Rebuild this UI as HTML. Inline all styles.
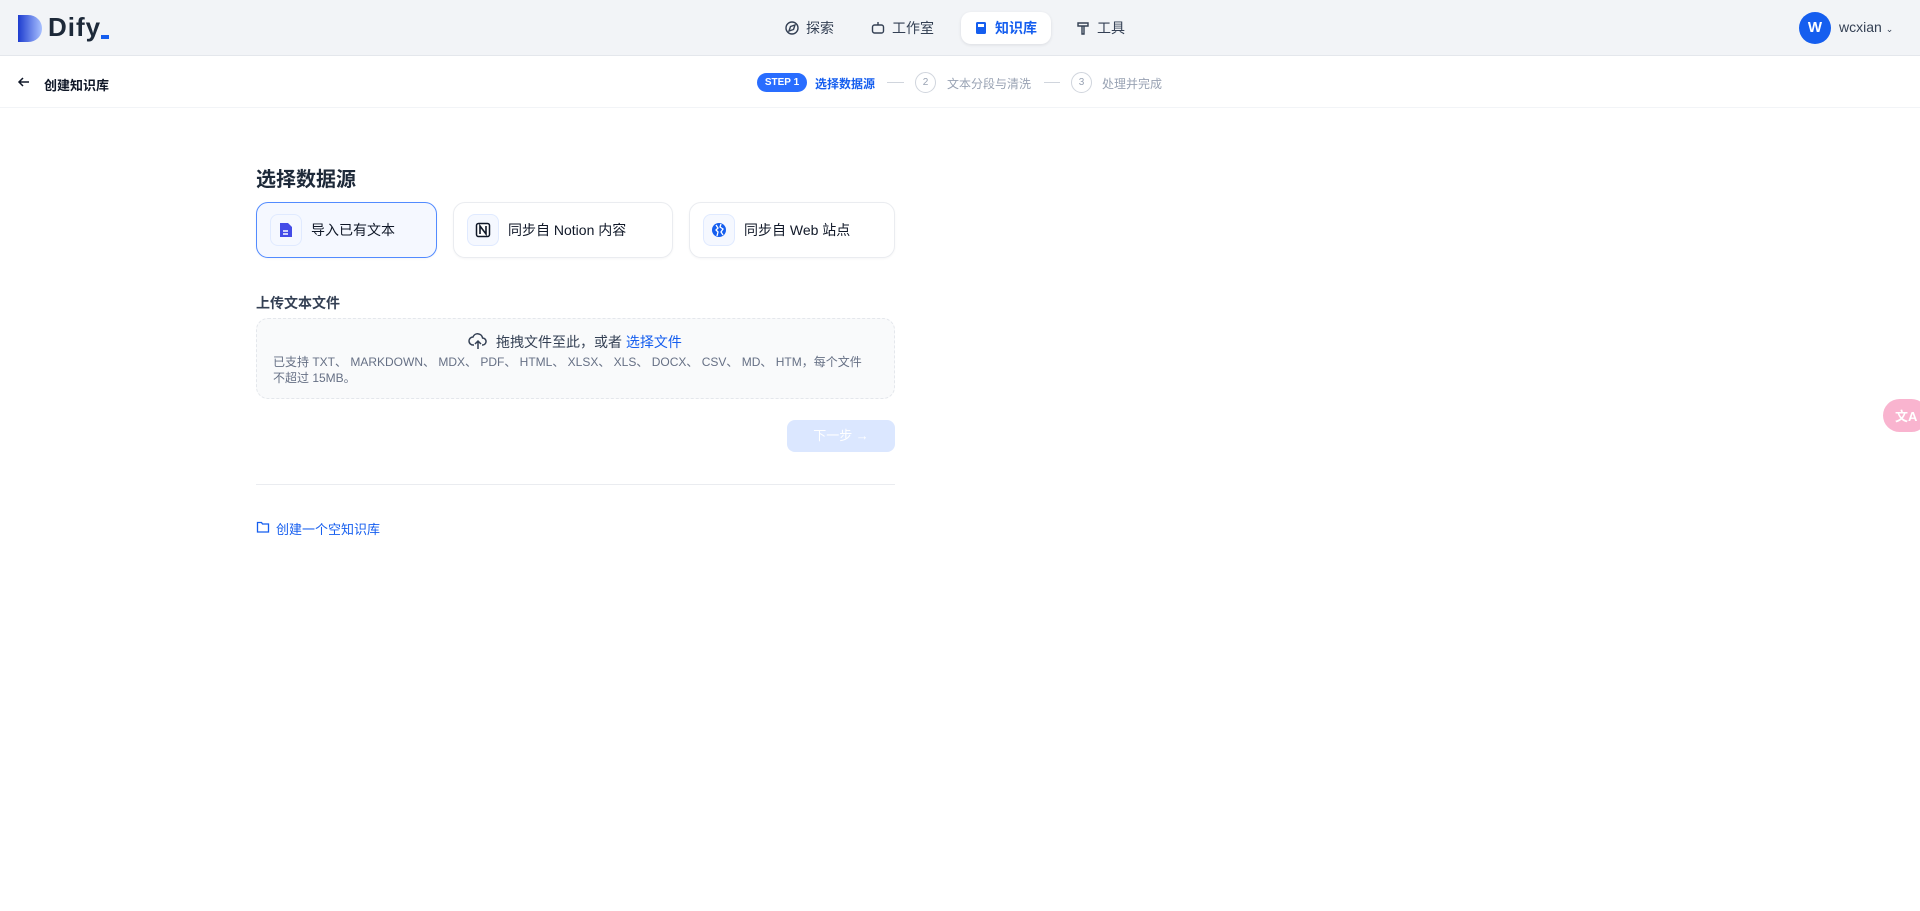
<!DOCTYPE html>
<html><head><meta charset="utf-8"><style>
*{box-sizing:border-box;margin:0;padding:0}
body{width:1920px;height:911px;background:#fff;font-family:"Liberation Sans","Noto Sans CJK SC",sans-serif;position:relative;overflow:hidden;color:#101828}
.abs{position:absolute}
.hdr{left:0;top:0;width:1920px;height:56px;background:#f2f4f7;border-bottom:1px solid #e4e7ec}
.nav{top:12px;height:32px;display:flex;align-items:center;gap:6px;font-size:14px;color:#344054}
.sub{left:0;top:56px;width:1920px;height:52px;border-bottom:1px solid #f2f4f7}
.card{top:202px;height:56px;border:1px solid #eaecf0;border-radius:12px;background:#fff;display:flex;align-items:center;padding-left:13px;font-size:14px;color:#101828;box-shadow:0 1px 2px rgba(16,24,40,.04)}
.ib{width:32px;height:32px;border:1px solid #e0eaff;border-radius:8px;background:#f5f8ff;display:flex;align-items:center;justify-content:center;margin-right:9px}
</style></head><body>
<div class="abs hdr"></div>
<svg class="abs" style="left:18px;top:15px" width="24" height="27" viewBox="0 0 24 27"><defs><linearGradient id="g" x1="0" x2="1"><stop offset="0" stop-color="#1d3ccf"/><stop offset="1" stop-color="#a9c1ff"/></linearGradient></defs><path d="M0 0h10c8 0 14 6 14 13.5S18 27 10 27H0z" fill="url(#g)"/></svg>
<div class="abs" style="left:48px;top:12px;font-size:26px;font-weight:bold;color:#1d2939;letter-spacing:1px">Dify</div>
<div class="abs" style="left:101px;top:35px;width:8px;height:4px;background:#155eef"></div>
<div class="abs nav" style="left:784px"><svg width="16" height="16" viewBox="0 0 16 16" fill="none" stroke="#344054" stroke-width="1.4"><circle cx="8" cy="8" r="6"/><path d="M5 11l1.5-4.5L11 5 9.5 9.5z"/></svg>探索</div>
<div class="abs nav" style="left:870px"><svg width="16" height="16" viewBox="0 0 16 16" fill="none" stroke="#344054" stroke-width="1.4"><rect x="2.5" y="5" width="11" height="8" rx="2"/><path d="M8 2v3M6 9h0M10 9h0"/></svg>工作室</div>
<div class="abs" style="left:961px;top:12px;width:90px;height:32px;background:#fff;border-radius:10px;box-shadow:0 1px 3px rgba(16,24,40,.1)"></div>
<div class="abs nav" style="left:973px;color:#155eef;font-weight:bold"><svg width="16" height="16" viewBox="0 0 16 16"><rect x="3" y="2" width="10" height="12" rx="1.5" fill="#155eef"/><rect x="5" y="4" width="6" height="3" fill="#fff"/></svg>知识库</div>
<div class="abs nav" style="left:1075px"><svg width="16" height="16" viewBox="0 0 16 16" fill="none" stroke="#344054" stroke-width="1.4"><path d="M3 3h10v3H3zM7 6h2v8H7z"/></svg>工具</div>
<div class="abs" style="left:1799px;top:12px;width:32px;height:32px;border-radius:50%;background:#155eef;color:#fff;font-size:15px;font-weight:bold;text-align:center;line-height:32px">W</div>
<div class="abs" style="left:1839px;top:19px;font-size:14px;color:#344054">wcxian <span style="font-size:9px">⌄</span></div>
<div class="abs sub"></div>
<svg class="abs" style="left:16px;top:74px" width="16" height="16" viewBox="0 0 16 16" fill="none" stroke="#101828" stroke-width="1.5"><path d="M13 8H3M7 4L3 8l4 4"/></svg>
<div class="abs" style="left:44px;top:75px;font-size:13px;font-weight:bold">创建知识库</div>
<div class="abs" style="left:757px;top:73px;width:50px;height:19px;border-radius:10px;background:#296dff;color:#fff;font-size:10px;font-weight:bold;text-align:center;line-height:19px">STEP 1</div>
<div class="abs" style="left:815px;top:75px;font-size:12px;color:#155eef;font-weight:bold">选择数据源</div>
<div class="abs" style="left:887px;top:82px;width:17px;height:1px;background:#d0d5dd"></div>
<div class="abs" style="left:915px;top:72px;width:21px;height:21px;border:1px solid #d0d5dd;border-radius:50%;font-size:10px;color:#98a2b3;text-align:center;line-height:19px">2</div>
<div class="abs" style="left:947px;top:75px;font-size:12px;color:#98a2b3">文本分段与清洗</div>
<div class="abs" style="left:1044px;top:82px;width:16px;height:1px;background:#d0d5dd"></div>
<div class="abs" style="left:1071px;top:72px;width:21px;height:21px;border:1px solid #d0d5dd;border-radius:50%;font-size:10px;color:#98a2b3;text-align:center;line-height:19px">3</div>
<div class="abs" style="left:1102px;top:75px;font-size:12px;color:#98a2b3">处理并完成</div>
<div class="abs" style="left:256px;top:163px;font-size:20px;font-weight:bold;color:#1d2939">选择数据源</div>
<div class="abs card" style="left:256px;width:181px;border-color:#528bff;background:#f5f8ff"><div class="ib"><svg width="14" height="16" viewBox="0 0 14 16"><path d="M1 1h8l4 4v10H1z" fill="#444ce7"/><path d="M4 9h5M4 12h5" stroke="#fff" stroke-width="1.4"/></svg></div>导入已有文本</div>
<div class="abs card" style="left:453px;width:220px"><div class="ib"><svg width="16" height="16" viewBox="0 0 16 16"><rect x="1.5" y="1.5" width="13" height="13" rx="2" fill="#fff" stroke="#101828" stroke-width="1.5"/><path d="M5 12V4l6 8V4" stroke="#101828" stroke-width="1.6" fill="none"/></svg></div>同步自 Notion 内容</div>
<div class="abs card" style="left:689px;width:206px"><div class="ib"><svg width="16" height="16" viewBox="0 0 16 16"><circle cx="8" cy="8" r="7" fill="#155eef"/><path d="M5 3l2 3-2 2 2 2-1 4M10 2l-1 3 3 2-2 3 2 3" stroke="#fff" stroke-width="1.3" fill="none"/></svg></div>同步自 Web 站点</div>
<div class="abs" style="left:256px;top:293px;font-size:14px;font-weight:bold;color:#344054">上传文本文件</div>
<div class="abs" style="left:256px;top:318px;width:639px;height:81px;border:1px dashed #e4e7ec;border-radius:12px;background:#f9fafb"></div>
<svg class="abs" style="left:468px;top:331px" width="20" height="20" viewBox="0 0 20 20" fill="none" stroke="#344054" stroke-width="1.5"><path d="M6 14H5a4 4 0 010-8 5 5 0 019.6 1A3.5 3.5 0 0114.5 14H14M10 18v-8M7 13l3-3 3 3"/></svg>
<div class="abs" style="left:496px;top:332px;font-size:14px;color:#344054">拖拽文件至此，或者 <span style="color:#155eef">选择文件</span></div>
<div class="abs" style="left:273px;top:354px;width:598px;font-size:12px;line-height:16px;color:#667085">已支持 TXT、 MARKDOWN、 MDX、 PDF、 HTML、 XLSX、 XLS、 DOCX、 CSV、 MD、 HTM，每个文件 不超过 15MB。</div>
<div class="abs" style="left:787px;top:420px;width:108px;height:32px;border-radius:8px;background:#dbe7ff;color:#fff;font-size:13px;text-align:center;line-height:32px">下一步 →</div>
<div class="abs" style="left:256px;top:484px;width:639px;height:1px;background:#eaecf0"></div>
<svg class="abs" style="left:256px;top:520px" width="14" height="14" viewBox="0 0 14 14" fill="none" stroke="#155eef" stroke-width="1.3"><path d="M1.5 2.5h4l1 1.5h6v8h-11z"/></svg>
<div class="abs" style="left:276px;top:519px;font-size:13px;color:#155eef">创建一个空知识库</div>
<div class="abs" style="left:1883px;top:399px;width:45px;height:33px;border-radius:17px;background:#f9b4cf;color:#fff;font-size:13px;font-weight:bold;padding:7px 0 0 12px">文A</div>
</body></html>
